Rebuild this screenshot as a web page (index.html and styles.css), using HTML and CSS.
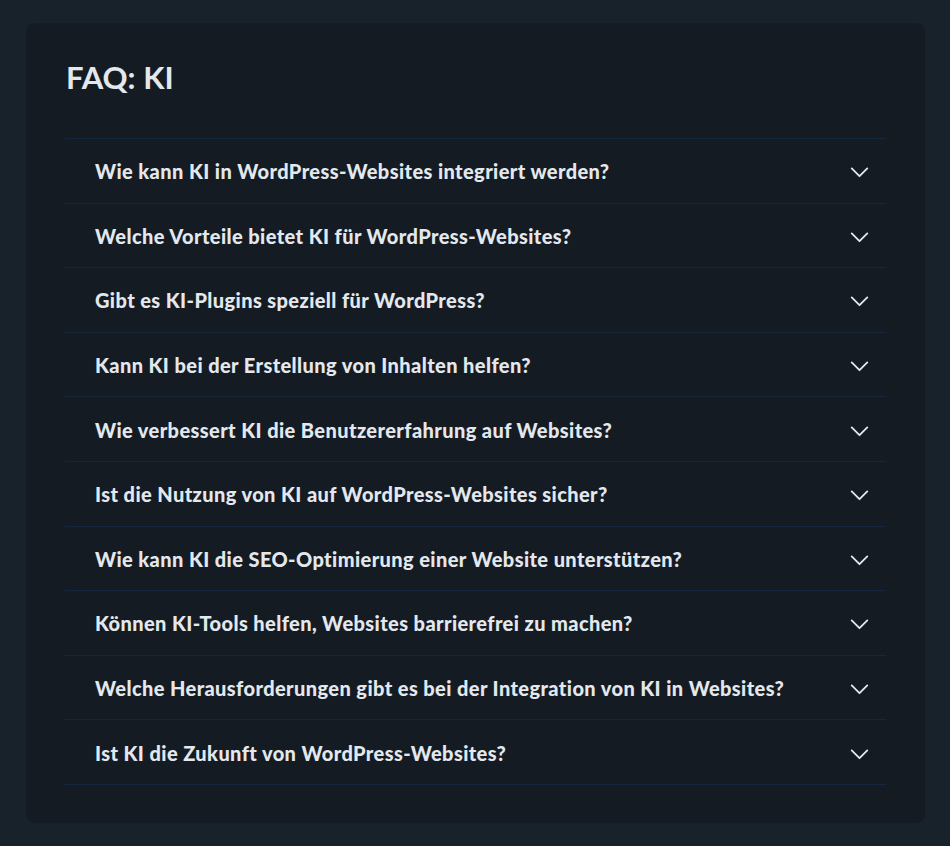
FILE: index.html
```html
<!DOCTYPE html>
<html lang="de">
<head>
<meta charset="utf-8">
<title>FAQ: KI</title>
<link rel="stylesheet" href="styles.css">
</head>
<body>
<section class="card">
  <h2 class="title">FAQ: KI</h2>
  <div class="faq">
    <div class="item"><span class="q">Wie kann KI in WordPress-Websites integriert werden?</span><svg class="chev" viewBox="0 0 20 12"><polyline points="1.5,1.5 10,10 18.5,1.5"/></svg></div>
    <div class="item"><span class="q">Welche Vorteile bietet KI für WordPress-Websites?</span><svg class="chev" viewBox="0 0 20 12"><polyline points="1.5,1.5 10,10 18.5,1.5"/></svg></div>
    <div class="item"><span class="q">Gibt es KI-Plugins speziell für WordPress?</span><svg class="chev" viewBox="0 0 20 12"><polyline points="1.5,1.5 10,10 18.5,1.5"/></svg></div>
    <div class="item"><span class="q">Kann KI bei der Erstellung von Inhalten helfen?</span><svg class="chev" viewBox="0 0 20 12"><polyline points="1.5,1.5 10,10 18.5,1.5"/></svg></div>
    <div class="item"><span class="q">Wie verbessert KI die Benutzererfahrung auf Websites?</span><svg class="chev" viewBox="0 0 20 12"><polyline points="1.5,1.5 10,10 18.5,1.5"/></svg></div>
    <div class="item"><span class="q">Ist die Nutzung von KI auf WordPress-Websites sicher?</span><svg class="chev" viewBox="0 0 20 12"><polyline points="1.5,1.5 10,10 18.5,1.5"/></svg></div>
    <div class="item"><span class="q">Wie kann KI die SEO-Optimierung einer Website unterstützen?</span><svg class="chev" viewBox="0 0 20 12"><polyline points="1.5,1.5 10,10 18.5,1.5"/></svg></div>
    <div class="item"><span class="q">Können KI-Tools helfen, Websites barrierefrei zu machen?</span><svg class="chev" viewBox="0 0 20 12"><polyline points="1.5,1.5 10,10 18.5,1.5"/></svg></div>
    <div class="item"><span class="q">Welche Herausforderungen gibt es bei der Integration von KI in Websites?</span><svg class="chev" viewBox="0 0 20 12"><polyline points="1.5,1.5 10,10 18.5,1.5"/></svg></div>
    <div class="item"><span class="q">Ist KI die Zukunft von WordPress-Websites?</span><svg class="chev" viewBox="0 0 20 12"><polyline points="1.5,1.5 10,10 18.5,1.5"/></svg></div>
  </div>
</section>
</body>
</html>
```

FILE: styles.css
```css
html, body {
  margin: 0;
  padding: 0;
}
body {
  background: #18222b;
  font-family: "Lato", "Noto Sans", sans-serif;
  color: #e3e8ee;
  padding: 23px 25px 23px 26px;
  height: 846px;
  box-sizing: border-box;
}
.card {
  background: #151b22;
  border-radius: 9px;
  height: 800px;
  box-sizing: border-box;
  padding: 36px 39px 39px 39px;
}
.title {
  margin: 0 0 0 1px;
  font-size: 31px;
  font-weight: 700;
  line-height: 36px;
  height: 79px;
}
.faq {
  border-top: 1px solid #13273f;
}
.item {
  display: flex;
  align-items: center;
  justify-content: space-between;
  height: 63.6px;
  border-bottom: 1px solid #13273f;
  padding: 0 17px 0 30px;
}
.q {
  font-size: 20px;
  font-weight: 900;
  letter-spacing: 0.4px;
  color: #e3e8ee;
  padding-top: 1px;
}
.chev {
  width: 19px;
  height: 11px;
  margin-top: 4px;
  fill: none;
  stroke: #e3e8ee;
  stroke-width: 2;
  stroke-linecap: round;
  stroke-linejoin: round;
}
```
